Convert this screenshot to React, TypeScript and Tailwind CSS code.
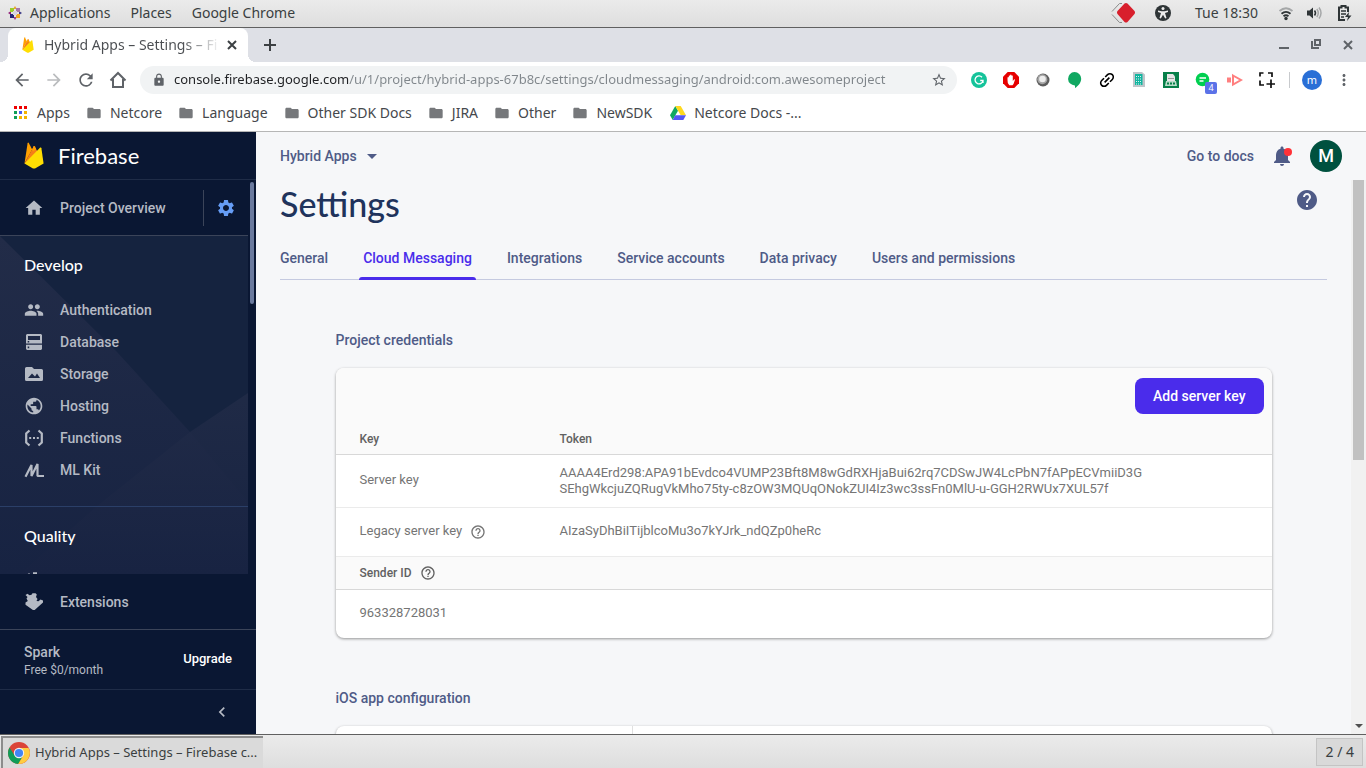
import type { ReactNode } from "react"
import {
  MdArrowBack,
  MdArrowForward,
  MdChevronLeft,
  MdFolder,
  MdHelp,
  MdHelpOutline,
  MdHome,
  MdLink,
  MdLock,
  MdMoreVert,
  MdNotifications,
  MdPeople,
  MdPublic,
  MdRefresh,
  MdSettings,
  MdStarBorder,
} from "react-icons/md"

function FirebaseLogo({ className }: { className: string }) {
  return (
    <svg viewBox="0 0 20 27" className={className} aria-hidden="true">
      <path d="M0.5 21.5L3.6 1.2Q4 0 4.8 1L8.2 7.4L0.5 21.5Z" fill="#ffa000" />
      <path d="M0.5 21.5L9.6 4.4Q10.2 3.4 10.8 4.4L13.4 9.4L4 20Z" fill="#f57f17" />
      <path d="M8.2 7.4L9.6 4.4Q10.2 3.4 10.8 4.4L12.2 7L9 9.5Z" fill="#ffa000" />
      <path d="M0.5 21.5L16.2 5.6Q17.2 5 17.4 6.2L19.6 21.5L11 26.4Q10 26.8 9 26.4Z" fill="#ffde03" />
    </svg>
  )
}

function ChromeLogo() {
  return (
    <svg viewBox="0 0 24 24" className="size-6" aria-hidden="true">
      <circle cx="12" cy="12" r="11" fill="#db4437" />
      <path d="M2.5 6.5A11 11 0 0 0 11.2 23L16.3 14.5L12 12L7.7 14.5Z" fill="#0f9d58" />
      <path d="M11.2 23A11 11 0 0 0 21.6 7H12L16.3 14.5Z" fill="#ffcd40" />
      <circle cx="12" cy="12" r="5.2" fill="#f1f1f1" />
      <circle cx="12" cy="12" r="4.1" fill="#4285f4" />
    </svg>
  )
}

function DriveLogo() {
  return (
    <svg viewBox="0 0 16 14" className="size-4" aria-hidden="true">
      <path d="M5.3 0L0 9.3L2.7 14L8 4.7Z" fill="#11a861" />
      <path d="M5.3 0H10.7L16 9.3H10.7Z" fill="#ffd91f" />
      <path d="M5.3 9.3H16L13.3 14H2.7Z" fill="#5457f5" />
    </svg>
  )
}

function AppsGrid() {
  const colors = ["#e00", "#e00", "#e00", "#0f9d58", "#4a5cf0", "#f4b400", "#0f9d58", "#f4b400", "#f4b400"]
  return (
    <svg viewBox="0 0 13 13" className="size-[13px]" aria-hidden="true">
      {colors.map((fill, i) => (
        <rect key={i} x={(i % 3) * 5} y={Math.floor(i / 3) * 5} width="3" height="3" fill={fill} />
      ))}
    </svg>
  )
}

function CloseIcon() {
  return (
    <svg viewBox="0 0 14 14" className="size-3.5" stroke="currentColor" strokeWidth="2">
      <path d="M3 3l8 8M11 3l-8 8" />
    </svg>
  )
}

const navItems: { name: string; icon: ReactNode }[] = [
  { name: "Authentication", icon: <MdPeople className="size-5" /> },
  {
    name: "Database",
    icon: (
      <svg viewBox="0 0 20 20" className="size-5" fill="currentColor">
        <path
          fillRule="evenodd"
          d="M3 2h14l1 1v8.500H2V3zM4 4v4h12V4zM3.700 9v1.500h1.500V9zM2 12.800h16V17l-1 1H3l-1-1zM3.700 14.600v1.600h1.500v-1.600z"
        />
      </svg>
    ),
  },
  {
    name: "Storage",
    icon: (
      <svg viewBox="0 0 20 20" className="size-5" fill="currentColor">
        <path
          fillRule="evenodd"
          d="M2.500 3H8l2 2h7.500A1.500 1.500 0 0 1 19 6.500v9A1.500 1.500 0 0 1 17.500 17h-15A1.500 1.500 0 0 1 1 15.500v-11A1.500 1.500 0 0 1 2.500 3zM4 14h12l-3-4.500-2 3-3-3z"
        />
      </svg>
    ),
  },
  { name: "Hosting", icon: <MdPublic className="size-5" /> },
  {
    name: "Functions",
    icon: (
      <svg viewBox="0 0 20 20" className="size-5" fill="none" stroke="currentColor" strokeWidth="2.200">
        <path d="M5.500 2.500L2.200 5.500v9l3.300 3M14.500 2.500l3.300 3v9l-3.300 3" />
        <path d="M5.200 10h2M9 10h2M12.800 10h2" />
      </svg>
    ),
  },
  {
    name: "ML Kit",
    icon: (
      <svg viewBox="0 0 20 20" className="size-5" fill="none" stroke="currentColor" strokeWidth="2.200">
        <path d="M1.500 16.800L7.500 5v11L13.500 4v12H20" strokeLinejoin="bevel" />
      </svg>
    ),
  },
]

const bookmarks = ["Netcore", "Language", "Other SDK Docs", "JIRA", "Other", "NewSDK"]

const tabs = [
  "General",
  "Cloud Messaging",
  "Integrations",
  "Service accounts",
  "Data privacy",
  "Users and permissions",
]

function SystemBar() {
  return (
    <header className="flex h-7 shrink-0 items-center border-b border-[#606060] bg-linear-to-b from-[#ebebeb] to-[#dedede] pr-3.5 pb-0.5 pl-2 text-sm text-[#3a3f41]">
      <svg viewBox="0 0 14 14" className="size-3.5" aria-hidden="true">
        <path d="M7 0l2 3H5z" fill="#e8a630" />
        <path d="M7 14l2-3H5z" fill="#a0408a" />
        <path d="M0 7l3-2v4z" fill="#932279" />
        <path d="M14 7l-3-2v4z" fill="#3c3a86" />
        <path d="M2 2h4v4H2z" fill="#9ccd2a" />
        <path d="M8 2h4v4H8z" fill="#a878a8" />
        <path d="M2 8h4v4H2z" fill="#262577" />
        <path d="M8 8h4v4H8z" fill="#efa724" />
        <path d="M5 5h4v4H5z" fill="#d8d3e0" />
      </svg>
      <nav className="ml-2 flex flex-1 gap-5">
        <button>Applications</button>
        <button>Places</button>
        <button>Google Chrome</button>
      </nav>
      <svg viewBox="0 0 24 22" className="h-[22px] w-6" aria-hidden="true">
        <path d="M11 1.500H8.500L1 9.500M1 12.500l7.500 8H11" fill="none" stroke="#8a8a8a" />
        <path d="M13.500 1.500q1.500-1 3 0l7 7.500q1 1.500 0 3l-7 8q-1.500 1-3 0l-7-8q-1-1.500 0-3z" fill="#d81f2c" />
      </svg>
      <svg viewBox="0 0 16 16" className="ml-5 size-4" aria-hidden="true">
        <circle cx="8" cy="8" r="8" fill="#2e3436" />
        <circle cx="8" cy="3.600" r="1.500" fill="#ececec" />
        <path d="M3 5.500l3.500.8h3l3.500-.8v1.400l-3 1 1.500 5-1.300.5L8 9.800l-2.200 3.600-1.300-.5 1.500-5-3-1z" fill="#ececec" />
      </svg>
      <time className="ml-6">Tue 18:30</time>
      <svg viewBox="0 0 16 16" className="ml-5 size-4" fill="none" strokeWidth="1.800" aria-hidden="true">
        <path d="M1.500 6Q8 .5 14.500 6" stroke="#a5a7a8" />
        <path d="M3.500 8.800Q8 5 12.500 8.800M5.500 11.300Q8 9.300 10.500 11.300" stroke="#2e3436" />
        <circle cx="8" cy="13.500" r="1.700" fill="#2e3436" />
      </svg>
      <svg viewBox="0 0 16 16" className="ml-3 size-4" fill="none" strokeWidth="1.500" aria-hidden="true">
        <path d="M1 5.500h2.500L7 2.500v11L3.500 10.500H1z" fill="#2e3436" />
        <path d="M8.500 5.500q2 2.500 0 5" stroke="#2e3436" />
        <path d="M10.800 4q3 4 0 8M13 2.500q4 5.500 0 11" stroke="#a5a7a8" />
      </svg>
      <svg viewBox="0 0 16 16" className="ml-3.5 size-4" fill="none" stroke="#2e3436" strokeWidth="2" aria-hidden="true">
        <path d="M12 7V2.500H9.500V1h-4v1.500H3V15h6" />
        <path d="M5 6h5M5 9h5M5 12h3" strokeWidth="1.500" />
        <path d="M13 7l-4 5h3l-1 4 4.500-5.500h-3z" fill="#2e3436" stroke="none" />
      </svg>
    </header>
  )
}

function TabStrip() {
  return (
    <div className="flex h-[34px] shrink-0 items-center bg-[#dee0e6] text-[#4d5156]">
      <span className="size-2 self-end bg-[radial-gradient(circle_at_0_0,transparent_8px,#fff_8px)]" />
      <div className="flex h-full w-60 items-center rounded-t-lg bg-white pr-[9px] pl-3">
        <FirebaseLogo className="h-4 w-4" />
        <span className="ml-2 flex-1 overflow-hidden bg-linear-to-r from-[#4a4d51] from-80% to-[#4a4d51]/10 bg-clip-text text-sm whitespace-nowrap text-transparent">
          Hybrid Apps – Settings – Fi
        </span>
        <button aria-label="Close tab" className="ml-2 text-[#3c4043]">
          <CloseIcon />
        </button>
      </div>
      <span className="size-2 self-end bg-[radial-gradient(circle_at_100%_0,transparent_8px,#fff_8px)]" />
      <button aria-label="New tab" className="ml-2 text-[#3c4043]">
        <svg viewBox="0 0 12 12" className="size-3" stroke="currentColor" strokeWidth="2">
          <path d="M6 0v12M0 6h12" />
        </svg>
      </button>
      <div className="ml-auto flex text-[#5f6368]">
        <button aria-label="Minimize" className="flex w-8 justify-center">
          <svg viewBox="0 0 12 12" className="size-3" stroke="currentColor" strokeWidth="2">
            <path d="M1 10h10" />
          </svg>
        </button>
        <button aria-label="Restore" className="flex w-8 justify-center">
          <svg viewBox="0 0 12 12" className="size-3" fill="none" stroke="currentColor" strokeWidth="2">
            <path d="M5 2h5v5H5zM2 3v7h7" />
          </svg>
        </button>
        <button aria-label="Close window" className="mr-0.5 flex w-8 justify-center">
          <CloseIcon />
        </button>
      </div>
    </div>
  )
}

function ExtensionIcons() {
  return (
    <div className="flex items-center">
      <button aria-label="Grammarly" className="flex w-8 justify-center">
        <svg viewBox="0 0 16 16" className="size-4">
          <circle cx="8" cy="8" r="8" fill="#15c39a" />
          <path d="M11 5.200A4 4 0 1 0 12 8.500H9.200M12 8.500v2.500" fill="none" stroke="#fff" strokeWidth="1.300" />
        </svg>
      </button>
      <button aria-label="Ad blocker" className="flex w-8 justify-center">
        <svg viewBox="0 0 16 16" className="size-4">
          <path d="M4.700 0h6.600L16 4.700v6.600L11.300 16H4.700L0 11.300V4.700z" fill="#e60000" />
          <path d="M4.500 8V5.500q.7-.8 1.300 0V7V3.800q.7-.8 1.300 0V7V3q.7-.8 1.400 0v4V3.800q.7-.8 1.300 0V9l1.200-1.500q1-.5 1 .3L10.500 12l-1 1.200H6.300L4.800 11z" fill="#fff" />
        </svg>
      </button>
      <button aria-label="Sphere" className="flex w-8 justify-center">
        <svg viewBox="0 0 16 16" className="size-4">
          <circle cx="8" cy="8" r="6.500" fill="#5c5c5c" />
          <circle cx="7.300" cy="7.300" r="5" fill="#a5a5a5" />
          <circle cx="7.500" cy="7" r="3.300" fill="#ededed" />
        </svg>
      </button>
      <button aria-label="Hangouts" className="flex w-8 justify-center">
        <svg viewBox="0 0 16 16" className="size-4">
          <path d="M7.500 0a6.700 6.700 0 0 1 6.700 6.700C14.200 11 10.500 14.500 8 16v-2.600A6.700 6.700 0 0 1 7.500 0z" fill="#10a861" />
        </svg>
      </button>
      <button aria-label="Copy link" className="flex w-8 justify-center text-black">
        <MdLink className="size-5 -rotate-45" />
      </button>
      <button aria-label="Tables" className="flex w-8 justify-center">
        <svg viewBox="0 0 16 16" className="size-4">
          <path d="M2 0h9l3 2.500V15H2z" fill="#bfc6ca" />
          <path d="M4 2h7.500v11H4z" fill="#12b5a0" />
          <path d="M5 4.500h6M5 7h6M5 9.500h6M5 12h6" stroke="#dff5f0" strokeDasharray="1 1" />
        </svg>
      </button>
      <button aria-label="Spreadsheets" className="flex w-8 justify-center">
        <svg viewBox="0 0 16 16" className="size-4">
          <path d="M0 0h16v16H0z" fill="#08804a" />
          <path d="M4 2h6l2 2.500V9H4z" fill="#e6e6e6" />
          <path d="M3 9h10l1 5H2z" fill="#b9dcc9" />
          <path d="M5 6.500h6" stroke="#9a9a9a" />
          <path d="M4 11.500h8" stroke="#08804a" strokeWidth="2" strokeDasharray="2 1" />
        </svg>
      </button>
      <button aria-label="Chat, 4 unread" className="relative flex w-8 justify-center">
        <svg viewBox="0 0 16 16" className="size-4">
          <circle cx="7.500" cy="7.500" r="6.800" fill="#00cf50" />
          <path d="M4.500 6h6.500M4.500 9h4" stroke="#fff" strokeWidth="1.300" />
        </svg>
        <span className="absolute top-2.5 left-[18px] flex h-3 w-3 items-center justify-center rounded-[2px] bg-[#5b72e8] text-[9px] leading-3 text-white">
          4
        </span>
      </button>
      <button aria-label="Screen recorder" className="flex w-8 justify-center">
        <svg viewBox="0 0 16 16" className="size-4" fill="none" stroke="#ff7f7f" strokeWidth="2">
          <path d="M0 5.500h4v5H0z" fill="#ff7f7f" stroke="none" />
          <path d="M6 3.500l8 4.500-8 4.500z" />
        </svg>
      </button>
      <button aria-label="Capture area" className="flex w-8 justify-center">
        <svg viewBox="0 0 16 16" className="size-4" fill="none" stroke="#111" strokeWidth="1.700">
          <path d="M1 4.500V1h3.500M9 1h4v4M1 8.500V13h4M12 7.500V16M7.500 12H16" />
        </svg>
      </button>
    </div>
  )
}

function Toolbar() {
  return (
    <div className="flex h-9 shrink-0 items-center bg-white px-1.5 text-[#5f6368]">
      <button aria-label="Back" className="flex w-8 justify-center">
        <MdArrowBack className="size-5" />
      </button>
      <button aria-label="Forward" className="flex w-8 justify-center text-[#babcbe]">
        <MdArrowForward className="size-5" />
      </button>
      <button aria-label="Reload" className="flex w-8 justify-center">
        <MdRefresh className="size-5" />
      </button>
      <button aria-label="Home" className="flex w-8 justify-center">
        <svg viewBox="0 0 18 18" className="size-[18px]" fill="none" stroke="currentColor" strokeWidth="2">
          <path d="M1.500 9.500L9 2l7.500 7.500M4 8v8h10V8" />
        </svg>
      </button>
      <label className="mx-1.5 flex h-7 flex-1 items-center rounded-full bg-[#f1f3f4] pr-2.5 pl-3">
        <MdLock className="size-3.5 shrink-0" />
        <input
          aria-label="Address"
          defaultValue="console.firebase.google.com/u/1/project/hybrid-apps-67b8c/settings/cloudmessaging/android:com.awesomeproject"
          className="ml-2 min-w-0 flex-1 bg-[linear-gradient(to_right,#202124_175px,#80868b_175px)] bg-clip-text text-[13px] text-transparent outline-none"
        />
        <MdStarBorder className="size-4 shrink-0" />
      </label>
      <ExtensionIcons />
      <span className="mx-1.5 h-4 w-px bg-[#c8cacd]" />
      <span className="ml-1.5 flex size-5 items-center justify-center rounded-full bg-[#2a6fd6] text-[11px] text-white">
        m
      </span>
      <button aria-label="Chrome menu" className="ml-1.5 flex w-8 justify-center">
        <MdMoreVert className="size-[18px]" />
      </button>
    </div>
  )
}

function BookmarksBar() {
  return (
    <nav className="flex h-[34px] shrink-0 items-center gap-4 border-b border-[#b6b6b6] bg-white px-3.5 pb-1 text-sm text-[#45484c]">
      <a href="#apps" className="flex items-center gap-2.5">
        <AppsGrid />
        Apps
      </a>
      {bookmarks.map((name) => (
        <a key={name} href={`#${name}`} className="flex items-center gap-2">
          <MdFolder className="size-4 text-[#76787b]" />
          {name}
        </a>
      ))}
      <a href="#docs" className="ml-0.5 flex items-center gap-2">
        <DriveLogo />
        Netcore Docs -...
      </a>
    </nav>
  )
}

function Sidebar() {
  return (
    <aside className="flex w-64 shrink-0 flex-col bg-[#0a1733] text-sm text-[#b5bac4]">
      <div className="flex h-12 shrink-0 items-center gap-3.5 border-b border-[#1f2c47] pl-6 text-[22px] text-white">
        <FirebaseLogo className="h-[27px] w-5" />
        <span className="font-[Lato,sans-serif]">Firebase</span>
      </div>
      <div className="flex min-h-0 flex-1">
        <div className="flex min-w-0 flex-1 flex-col overflow-hidden">
          <div className="flex h-14 shrink-0 items-center border-b border-[#3b4459] pr-3 pl-6 font-medium">
            <a href="#overview" className="flex flex-1 items-center gap-4">
              <MdHome className="size-5" />
              Project Overview
            </a>
            <a href="#settings" aria-label="Project settings" className="flex h-9 items-center border-l border-[#3b4459] pl-3 text-[#669df6]">
              <MdSettings className="size-5" />
            </a>
          </div>
          <div className="relative bg-[#15233f]">
            <svg viewBox="0 0 248 338" className="absolute inset-x-0 top-0 w-full" aria-hidden="true">
              <defs>
                <linearGradient id="left" x1="0" y1="0" x2="0" y2="1">
                  <stop offset="0" stopColor="#222c48" />
                  <stop offset="1" stopColor="#172342" />
                </linearGradient>
                <linearGradient id="right" x1="0" y1="0" x2="0" y2="1">
                  <stop offset="0" stopColor="#222c48" />
                  <stop offset="1" stopColor="#182342" />
                </linearGradient>
              </defs>
              <path d="M0 0L117 116L190 196L248 266V338H0z" fill="url(#left)" />
              <path d="M248 157L190 196L97 270L20 338H248z" fill="url(#right)" fillOpacity=".8" />
            </svg>
            <section className="relative border-b border-[#2b3f68] pb-5">
              <h2 className="flex h-[58px] items-center pl-6 font-[Lato,sans-serif] text-base font-medium text-white">Develop</h2>
              <ul className="font-medium">
                {navItems.map((item) => (
                  <li key={item.name}>
                    <a href={`#${item.name}`} className="flex h-8 items-center gap-4 pl-6">
                      {item.icon}
                      {item.name}
                    </a>
                  </li>
                ))}
              </ul>
            </section>
            <section className="relative">
              <h2 className="flex h-[58px] items-center pl-6 font-[Lato,sans-serif] text-base font-medium text-white">Quality</h2>
              <a href="#stability" aria-label="Stability" className="flex h-8 items-center pl-6">
                <svg viewBox="0 0 20 20" className="size-5" fill="currentColor">
                  <path d="M9 1.200h4v4l4 3-7 10L3 9l1-6.500h2v2h3z" />
                </svg>
              </a>
            </section>
          </div>
        </div>
        <div className="w-2 shrink-0 pt-0.5 pl-0.5">
          <div className="h-[122px] w-1 rounded-full bg-[#6b7a9e]" />
        </div>
      </div>
      <a href="#extensions" className="flex h-14 shrink-0 items-center gap-4 border-b border-[#3b4459] pl-6 font-medium">
        <svg viewBox="0 0 20 20" className="size-5" fill="currentColor" aria-hidden="true">
          <path d="M1.500 3L3.500 1.800L5.500 3.300L7.500 2.800L8.500 1.200H11.500L12.800 2.500L12 5L13.500 7L12.500 9L14.500 9.300L16.500 7.500L19 8.500V10.500L11.500 17.200Q10 18.800 8.200 17.500L1.500 12.800V10.500L3.800 9L2.500 6.500L3.500 5Z" />
        </svg>
        Extensions
      </a>
      <div className="flex h-[60px] shrink-0 items-center justify-between border-b border-[#1f2c47] px-6">
        <div>
          <div className="leading-5 font-medium">Spark</div>
          <div className="text-xs leading-4">Free $0/month</div>
        </div>
        <button className="text-[13px] font-medium text-white">Upgrade</button>
      </div>
      <div className="flex h-11 shrink-0 items-center justify-end pr-6">
        <button aria-label="Collapse sidebar">
          <MdChevronLeft className="size-5" />
        </button>
      </div>
    </aside>
  )
}

function Credentials() {
  return (
    <div className="overflow-hidden rounded-lg bg-white text-[13px] font-normal text-[#757575] shadow-[0_1px_3px_rgba(0,0,0,0.4)]">
      <div className="flex h-14 items-center justify-end bg-[#fafafa] pr-2">
        <button className="h-9 rounded-lg bg-[#4a2ceb] px-[18px] text-sm font-medium text-white">Add server key</button>
      </div>
      <table className="w-full text-left">
        <thead className="bg-[#fafafa] text-xs text-[#616161]">
          <tr className="h-[30px] border-b border-[#d8d8d8]">
            <th scope="col" className="w-[200px] pl-6 font-medium">Key</th>
            <th scope="col" className="pl-6 font-medium">Token</th>
          </tr>
        </thead>
        <tbody>
          <tr className="h-[53px] border-b border-[#ebebeb]">
            <td className="pl-6">Server key</td>
            <td className="pl-6 leading-4">
              AAAA4Erd298:APA91bEvdco4VUMP23Bft8M8wGdRXHjaBui62rq7CDSwJW4LcPbN7fAPpECVmiiD3G
              <br />
              SEhgWkcjuZQRugVkMho75ty-c8zOW3MQUqONokZUI4Iz3wc3ssFn0MlU-u-GGH2RWUx7XUL57f
            </td>
          </tr>
          <tr className="h-[49px] border-b border-[#ebebeb]">
            <td className="pl-6">
              <span className="flex items-center gap-2">
                Legacy server key
                <MdHelpOutline className="size-4" />
              </span>
            </td>
            <td className="pl-6">AIzaSyDhBiITijblcoMu3o7kYJrk_ndQZp0heRc</td>
          </tr>
        </tbody>
      </table>
      <table className="w-full text-left">
        <thead className="bg-[#fafafa] text-xs text-[#616161]">
          <tr className="h-[33px] border-b border-[#d8d8d8]">
            <th scope="col" className="pl-6 font-medium">
              <span className="flex items-center gap-2">
                Sender ID
                <MdHelpOutline className="size-4" />
              </span>
            </th>
          </tr>
        </thead>
        <tbody>
          <tr className="h-12">
            <td className="pl-6">963328728031</td>
          </tr>
        </tbody>
      </table>
    </div>
  )
}

function Console() {
  return (
    <main className="flex min-w-0 flex-1 flex-col bg-[#f6f7f9] text-sm font-medium text-[#4f5b87]">
      <div className="flex h-12 shrink-0 items-center pr-6 pl-6">
        <button className="flex items-center gap-2.5">
          Hybrid Apps
          <svg viewBox="0 0 10 5" className="h-[5px] w-2.5" fill="currentColor">
            <path d="M0 0h10L5 5z" />
          </svg>
        </button>
        <a href="#docs" className="ml-auto">Go to docs</a>
        <button aria-label="Notifications" className="relative ml-4">
          <MdNotifications className="size-6" />
          <span className="absolute top-1 right-0.5 size-2 rounded-full bg-[#ff3238]" />
        </button>
        <button className="ml-4 flex size-8 items-center justify-center rounded-full bg-[#00513f] text-lg text-white">
          M
        </button>
      </div>
      <div className="flex min-h-0 flex-1">
        <div className="min-w-0 flex-1 overflow-hidden pr-6 pl-6">
          <div className="flex h-14 items-start justify-between">
            <h1 className="font-[Lato,sans-serif] text-[34px] leading-12 font-medium text-[#20335c]">Settings</h1>
            <MdHelp className="mt-2 mr-2 size-6" />
          </div>
          <nav className="flex h-11 gap-[35px] border-b border-[#c5cae0]">
            {tabs.map((tab) =>
              tab === "Cloud Messaging" ? (
                <a key={tab} href="#cloud" className="relative flex h-11 items-center text-[#4a2ceb]">
                  {tab}
                  <span className="absolute -inset-x-1 bottom-0 h-[3px] rounded-t-[3px] bg-[#4a2ceb]" />
                </a>
              ) : (
                <a key={tab} href={`#${tab}`} className="flex h-11 items-center">
                  {tab}
                </a>
              ),
            )}
          </nav>
          <div className="mx-auto max-w-[936px]">
            <h2 className="mt-[50px] mb-[18px] leading-5">Project credentials</h2>
            <Credentials />
            <h2 className="mt-[50px] mb-[18px] leading-5">iOS app configuration</h2>
            <div className="h-40 rounded-lg bg-white shadow-[0_1px_3px_rgba(0,0,0,0.4)]">
              <div className="h-full w-[297px] border-r border-[#e0e0e0]" />
            </div>
          </div>
        </div>
        <div className="flex w-[15px] shrink-0 flex-col items-center justify-between bg-[#f1f1f1] pb-1.5">
          <div className="h-[280px] w-[11px] bg-[#c1c1c1]" />
          <svg viewBox="0 0 8 4" className="h-1 w-2" fill="#505050" aria-hidden="true">
            <path d="M0 0h8L4 4z" />
          </svg>
        </div>
      </div>
    </main>
  )
}

function Taskbar() {
  return (
    <footer className="flex h-[34px] shrink-0 items-center justify-between border-t border-[#606060] bg-linear-to-b from-[#ebebeb] to-[#dedede] pr-[3px] pl-px text-sm text-[#3a3f41]">
      <button className="flex h-8 w-[262px] items-center gap-1 border-t-2 border-l-2 border-[#8c8c8c] bg-[#dadada] pl-1">
        <ChromeLogo />
        <span className="text-[13px] whitespace-nowrap">Hybrid Apps – Settings – Firebase c...</span>
      </button>
      <button className="h-7 border border-[#c4c4c4] bg-[#d9d9d9] px-2">2 / 4</button>
    </footer>
  )
}

export default function App() {
  return (
    <div className="flex h-screen flex-col overflow-hidden font-['Noto_Sans',sans-serif]">
      <SystemBar />
      <TabStrip />
      <Toolbar />
      <BookmarksBar />
      <div className="flex min-h-0 flex-1 font-[Roboto,sans-serif]">
        <Sidebar />
        <Console />
      </div>
      <Taskbar />
    </div>
  )
}
